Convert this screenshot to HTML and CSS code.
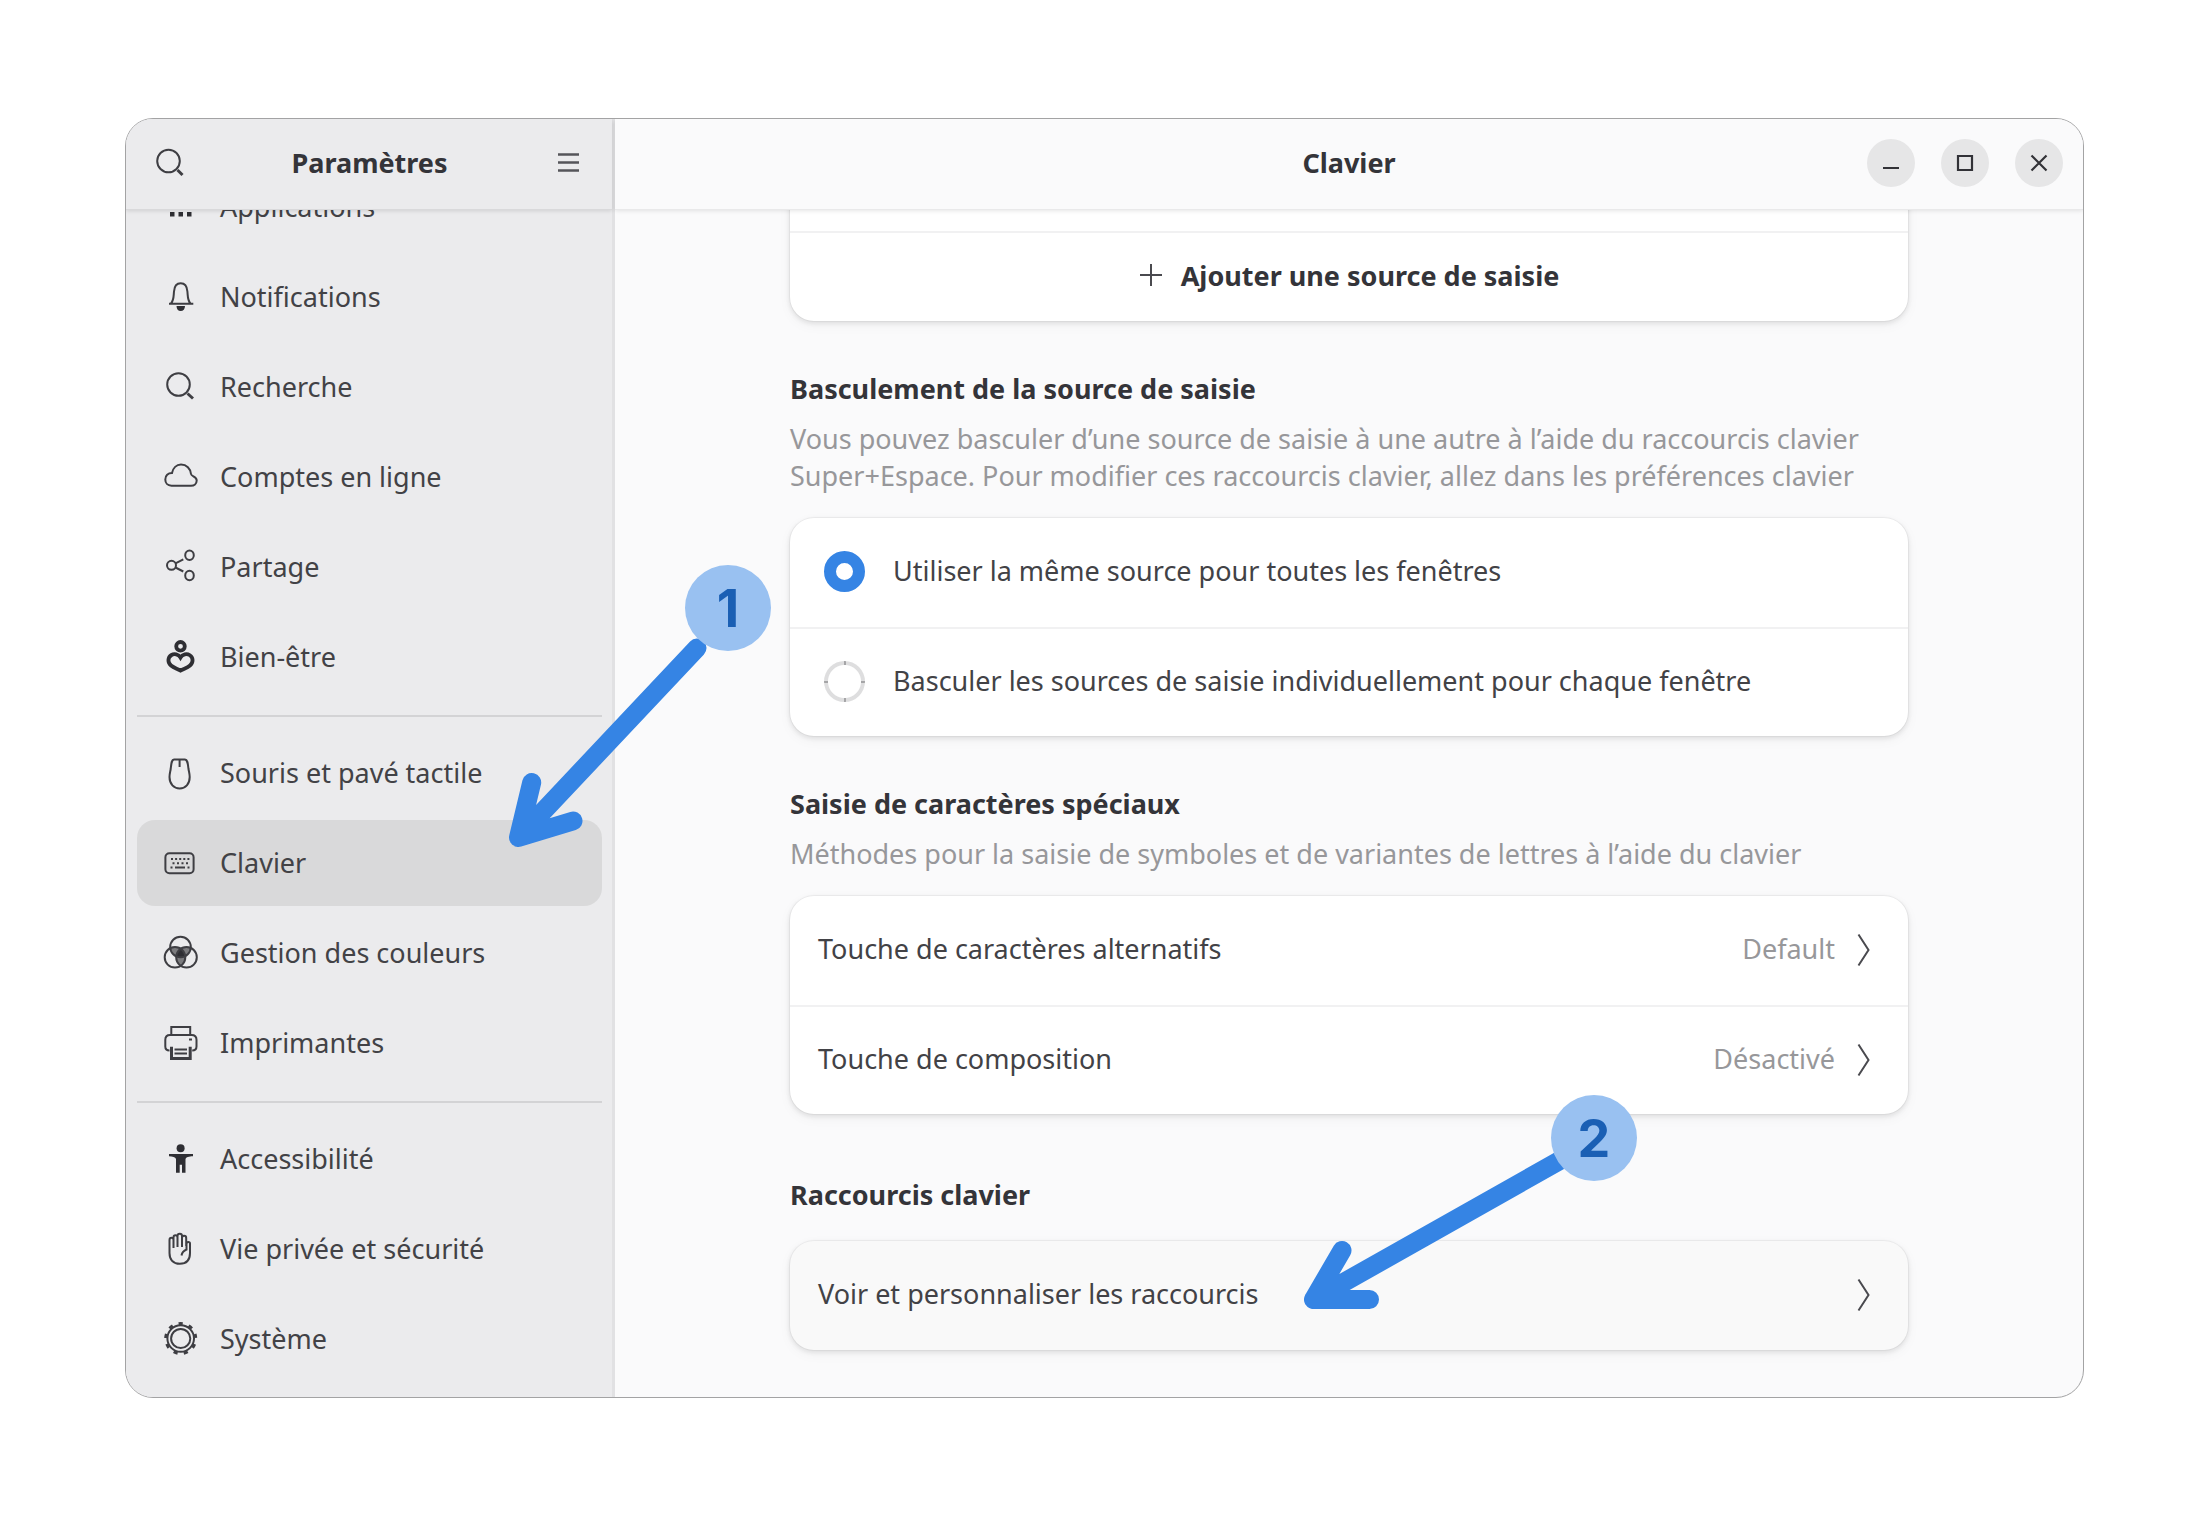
FILE: index.html
```html
<!DOCTYPE html>
<html lang="fr">
<head>
<meta charset="utf-8">
<title>Paramètres – Clavier</title>
<link rel="stylesheet" href="styles.css">
</head>
<body>
<div class="desktop">
  <div class="window">
    <aside class="sidebar">
      <header class="bar sidebar-bar">
        <button class="flat" aria-label="Rechercher">
          <svg class="icon" viewBox="0 0 36 36"><circle cx="15.5" cy="16" r="11.3"/><path class="w3" d="M24.5 25l5 5"/></svg>
        </button>
        <h1 class="title">Paramètres</h1>
        <button class="flat" aria-label="Menu">
          <svg class="icon menu" viewBox="0 0 36 36"><path d="M8 9.500h21M8 17.500h21M8 25.500h21"/></svg>
        </button>
      </header>
      <nav class="list">
        <a class="item" href="#applications">
          <svg class="icon" viewBox="0 0 36 36"><path class="fill" d="M7 23h4.500v4.500H7zM15.500 23H20v4.500h-4.500zM24 23h4.500v4.500H24z"/></svg>Applications</a>
        <a class="item" href="#notifications">
          <svg class="icon" viewBox="0 0 36 36"><path d="M8 24.500C11 21 10.500 17 11 12.500 11.400 7 13.500 4.300 17.700 4.300s6.300 2.700 6.700 8.200c.5 4.500 0 8.500 3 12M6 24.800h24.300"/><path class="fill" d="M13.500 27h8.500c0 3-1.800 5-4.300 5s-4.200-2-4.200-5z"/></svg>Notifications</a>
        <a class="item" href="#recherche">
          <svg class="icon" viewBox="0 0 36 36"><circle cx="15.500" cy="15.500" r="11.300"/><path class="w3" d="M24.500 24.500l5.500 5"/></svg>Recherche</a>
        <a class="item" href="#comptes">
          <svg class="icon" viewBox="0 0 36 36"><path d="M8.500 26.700c-4 0-6.200-2.700-6.200-6.200C2.300 16.500 5 14 9 14c1-5 4.500-8.500 9-8.500 5.500 0 9.500 4 10 9.500.3 2.500 5.700 2.500 5.700 6.500 0 3.500-2.700 5.200-5.700 5.200z"/></svg>Comptes en ligne</a>
        <a class="item" href="#partage">
          <svg class="icon" viewBox="0 0 36 36"><circle cx="8.500" cy="16.300" r="4.500"/><ellipse cx="26.500" cy="6.300" rx="4.300" ry="4.800"/><ellipse cx="26.500" cy="26.500" rx="4.300" ry="4.800"/><path d="M12.500 14.300l7.800-4M12.500 18.500l7.800 4"/></svg>Partage</a>
        <a class="item" href="#bien-etre">
          <svg class="icon" viewBox="0 0 36 36"><circle class="w4" cx="17.500" cy="7.300" r="4.300"/><path class="w4" d="M17.500 18.500C15.500 15 11 14.500 8.500 16c-4 2.500-4 7.500-.5 10.500 3 2.500 6 3 9.500 5 3.500-2 6.500-2.500 9.500-5 3.500-3 3.500-8-.5-10.500-2.500-1.500-7-1-9 2.500z"/></svg>Bien-être</a>
        <hr class="rule">
        <a class="item" href="#souris">
          <svg class="icon" viewBox="0 0 36 36"><path d="M11 4.500h11c2.500 0 2.800 3.500 3.500 9.500.5 3 1.200 5 1.200 8 0 7-4.200 11.500-10 11.500S6.500 29 6.500 22c0-3 .700-5 1.200-8 .700-6 .800-9.500 3.300-9.500zM16.600 5v7"/></svg>Souris et pavé tactile</a>
        <a class="item selected" href="#clavier" aria-current="page">
          <svg class="icon" viewBox="0 0 36 36"><rect x="2.400" y="8.300" width="28.200" height="20" rx="4"/><path stroke-dasharray="2 2.100" d="M8 14h18.500"/><path stroke-dasharray="2 2.500" d="M9.500 18.300h16"/><path d="M7.500 22.500h2M12 22.500h10M24.500 22.500h2"/></svg>Clavier</a>
        <a class="item" href="#couleurs">
          <svg class="icon" viewBox="0 0 36 36">
            <defs>
              <clipPath id="c-top"><circle cx="17.500" cy="12" r="10.300"/></clipPath>
              <clipPath id="c-left"><circle cx="12" cy="22.300" r="10.300"/></clipPath>
            </defs>
            <g class="shade">
              <circle cx="12" cy="22.300" r="10.300" clip-path="url(#c-top)"/>
              <circle cx="23.500" cy="22.300" r="10.300" clip-path="url(#c-top)"/>
              <circle cx="23.500" cy="22.300" r="10.300" clip-path="url(#c-left)"/>
            </g>
            <g clip-path="url(#c-top)"><circle class="fill" cx="23.500" cy="22.300" r="10.300" clip-path="url(#c-left)"/></g>
            <circle cx="17.500" cy="12" r="10.300"/><circle cx="12" cy="22.300" r="10.300"/><circle cx="23.500" cy="22.300" r="10.300"/>
          </svg>Gestion des couleurs</a>
        <a class="item" href="#imprimantes">
          <svg class="icon" viewBox="0 0 36 36"><path d="M8.300 9.500V2h18.900v7.500M6.500 25.500c-2.500 0-4.200-1.500-4.200-4v-6.700c0-3 2-4.800 4.700-4.800h21.500c3 0 5 1.800 5 4.800v6.700c0 2.500-1.800 4-4.300 4M26 14.500h3"/><path class="w3" d="M8.500 21.700v11.800h18.700V21.700"/><path d="M11.500 24.500H24M11.500 28.500H24"/></svg>Imprimantes</a>
        <hr class="rule">
        <a class="item" href="#accessibilite">
          <svg class="icon" viewBox="0 0 36 36"><circle class="fill" cx="17.600" cy="7.300" r="4"/><path class="fill" d="M6 13h24v2.200c-4 0-7 1-7.500 2.800v13.700h-3.500v-8h-2.300v8H13V18c-.5-1.800-3.500-2.800-7-2.800z"/></svg>Accessibilité</a>
        <a class="item" href="#vie-privee">
          <svg class="icon" viewBox="0 0 36 36"><path d="M10.500 17V9c0-3-4-3-4 0v13c0 7 4 10.800 10.300 10.800S27 29 27 22v-9.500c0-2-3.500-2-3.500.5v5.500c-2.500 1-4.500 3-5 6M10.500 17V6.500c0-3 4-3 4 0V16M14.500 6.500V5c0-3 4.500-3 4.500 0v11M19 7c0-3 4.200-3 4.200 0v8"/></svg>Vie privée et sécurité</a>
        <a class="item" href="#systeme">
          <svg class="icon" viewBox="0 0 36 36"><circle cx="17.700" cy="17.500" r="13.300"/><circle cx="17.700" cy="17.500" r="9.600"/><circle class="teeth" cx="17.700" cy="17.500" r="15" pathLength="360" stroke-dasharray="16 24" transform="rotate(-98 17.700 17.500)"/></svg>Système</a>
      </nav>
    </aside>

    <main class="content">
      <header class="bar content-bar">
        <h2 class="title">Clavier</h2>
        <div class="controls">
          <button class="round" aria-label="Réduire"><svg class="glyph" viewBox="0 0 24 24"><path d="M4 17h16"/></svg></button>
          <button class="round" aria-label="Agrandir"><svg class="glyph" viewBox="0 0 24 24"><path d="M5 5h14v14H5z"/></svg></button>
          <button class="round" aria-label="Fermer"><svg class="glyph" viewBox="0 0 24 24"><path d="M4.500 4.500l15 15M19.500 4.500l-15 15"/></svg></button>
        </div>
      </header>
      <div class="scroll">
        <div class="clamp">
          <section class="group">
            <div class="card">
              <div class="row"></div>
              <button class="row add"><svg class="plus" viewBox="0 0 24 24"><path d="M12 1v22M1 12h22"/></svg>Ajouter une source de saisie</button>
            </div>
          </section>
          <section class="group">
            <h3 class="heading">Basculement de la source de saisie</h3>
            <p class="about">Vous pouvez basculer d’une source de saisie à une autre à l’aide du raccourcis clavier Super+Espace. Pour modifier ces raccourcis clavier, allez dans les préférences clavier</p>
            <div class="card">
              <label class="row choice"><input class="radio" type="radio" name="source" checked>Utiliser la même source pour toutes les fenêtres</label>
              <label class="row choice"><input class="radio" type="radio" name="source">Basculer les sources de saisie individuellement pour chaque fenêtre</label>
            </div>
          </section>
          <section class="group">
            <h3 class="heading">Saisie de caractères spéciaux</h3>
            <p class="about">Méthodes pour la saisie de symboles et de variantes de lettres à l’aide du clavier</p>
            <div class="card">
              <button class="row"><span class="label">Touche de caractères alternatifs</span><span class="value">Default</span><svg class="chevron" viewBox="0 0 14 36"><path d="M1.500 2.500L11.500 18l-10 15.500"/></svg></button>
              <button class="row"><span class="label">Touche de composition</span><span class="value">Désactivé</span><svg class="chevron" viewBox="0 0 14 36"><path d="M1.500 2.500L11.500 18l-10 15.500"/></svg></button>
            </div>
          </section>
          <section class="group plain">
            <h3 class="heading">Raccourcis clavier</h3>
            <div class="card hovered">
              <button class="row"><span class="label">Voir et personnaliser les raccourcis</span><svg class="chevron" viewBox="0 0 14 36"><path d="M1.500 2.500L11.500 18l-10 15.500"/></svg></button>
            </div>
          </section>
        </div>
      </div>
    </main>

    <svg class="notes" viewBox="0 0 1957 1277" preserveAspectRatio="xMinYMin meet">
      <path class="arrow" d="M571 529L392.500 718.500M405.700 663.500L392.500 718.500 447 702"/>
      <path class="arrow" d="M1440 1038L1187.500 1180.500M1216 1131.500L1187.500 1180.500H1243.500"/>
      <circle class="badge" cx="602" cy="489" r="43"/>
      <text class="number" x="602" y="508">1</text>
      <circle class="badge" cx="1468" cy="1019" r="43"/>
      <text class="number" x="1468" y="1038">2</text>
    </svg>
  </div>
</div>
</body>
</html>
```
FILE: styles.css
```css
* { box-sizing: border-box; }

body {
  margin: 0;
  background: #fff;
  color: #424246;
  font: 27px/37px "Noto Sans", sans-serif;
}

h1, h2, h3, p { margin: 0; }

button {
  border: 0;
  padding: 0;
  background: none;
  color: inherit;
  font: inherit;
  text-align: left;
}

.desktop {
  display: grid;
  height: 100vh;
  padding: 118px 124px 133px 125px;
}

.window {
  position: relative;
  display: flex;
  min-height: 0;
  overflow: hidden;
  border: 1px solid #a3a3a4;
  border-radius: 28px;
  background: #fafafb;
}

/* Header bars */
.bar {
  position: relative;
  z-index: 1;
  flex: none;
  display: grid;
  align-items: center;
  height: 90px;
}

.title {
  margin-bottom: 2px;
  color: #343439;
  font-size: 27px;
  line-height: 37px;
  font-weight: 700;
}

.sidebar-bar {
  grid-template-columns: 36px 1fr 36px;
  padding: 0 26px 2px 27px;
  background: #ebebed;
  box-shadow: 0 1px 0 #d9d9db, 0 2px 4px rgba(0, 0, 6, .12);
  text-align: center;
}

.content-bar {
  grid-template-columns: 1fr auto 1fr;
  padding: 0 20px 2px;
  background: #fafafb;
  box-shadow: 0 1px 0 #e9e9ea, 0 2px 4px rgba(0, 0, 6, .1);
}

.content-bar .title { grid-column: 2; }

.controls {
  display: flex;
  justify-content: flex-end;
  gap: 26px;
}

.flat { display: flex; }

.round {
  display: grid;
  place-items: center;
  width: 48px;
  height: 48px;
  border-radius: 50%;
  background: #e6e6e7;
}

.glyph { width: 24px; height: 24px; }

.glyph path {
  fill: none;
  stroke: #323237;
  stroke-width: 2.2;
}

/* Icons */
.icon {
  flex: none;
  width: 36px;
  height: 36px;
  fill: none;
  stroke: #3e3e43;
  stroke-width: 2;
}

.icon .fill { fill: #2e2e33; stroke: none; }
.icon .shade { fill: #7b7b7e; stroke: none; }
.icon .w3 { stroke-width: 3; }
.icon .w4 { stroke: #2e2e33; stroke-width: 3.8; }
.icon .teeth { stroke-width: 3; }
.icon.menu { stroke: #55555a; stroke-width: 2.6; }

/* Sidebar */
.sidebar {
  flex: 0 0 489px;
  display: flex;
  flex-direction: column;
  min-height: 0;
  border-right: 3px solid #e1e1e3;
  background: #ebebed;
}

.list {
  flex: 1;
  display: flex;
  flex-direction: column;
  justify-content: flex-end;
  gap: 4px;
  min-height: 0;
  overflow: hidden;
  padding: 0 10px 15px 11px;
}

.item {
  flex: none;
  display: flex;
  align-items: center;
  gap: 21px;
  height: 86px;
  padding: 0 26px 2px;
  border-radius: 18px;
  color: inherit;
  text-decoration: none;
}

.item .icon { margin-top: 2px; }

.item.selected { background: #d9d9da; }

.rule {
  flex: none;
  width: 100%;
  height: 2px;
  margin: 11px 0 9px;
  border: 0;
  background: #d3d3d5;
}

/* Content */
.content {
  flex: 1;
  display: flex;
  flex-direction: column;
  min-width: 0;
}

.scroll {
  flex: 1;
  display: flex;
  flex-direction: column;
  justify-content: flex-end;
  align-items: center;
  min-height: 0;
  overflow: hidden;
  padding: 0 24px 47px;
}

.clamp {
  flex: none;
  width: 100%;
  max-width: 1118px;
}

.group + .group { margin-top: 49px; }
.group + .group.plain { margin-top: 62px; }

.heading {
  color: #343439;
  font-size: 27px;
  line-height: 37px;
  font-weight: 700;
}

.about {
  margin-top: 13px;
  color: #97979a;
}

.about + .card { margin-top: 24px; }
.plain .card { margin-top: 28px; }

.card {
  overflow: hidden;
  border-radius: 24px;
  background: #fff;
  box-shadow: 0 0 0 1px rgba(0, 0, 6, .04), 0 2px 4px 1px rgba(0, 0, 6, .08), 0 4px 12px 2px rgba(0, 0, 6, .03);
}

.card.hovered { background: #f9f9f9; }

.row {
  display: flex;
  align-items: center;
  width: 100%;
  height: 109px;
  padding: 0 28px 4px;
}

.row + .row { border-top: 2px solid #f1f1f2; }

.row.add {
  justify-content: center;
  gap: 18px;
  height: 90px;
  color: #343439;
  font-weight: 700;
}

.choice {
  gap: 28px;
  padding: 0 34px 4px;
}

.radio {
  flex: none;
  appearance: none;
  width: 41px;
  height: 41px;
  margin: 2px 0 0;
  border-radius: 50%;
  background:
    linear-gradient(#a5a5a7, #a5a5a7) 50% 0 / 2px 4px no-repeat,
    linear-gradient(#a5a5a7, #a5a5a7) 50% 100% / 2px 4px no-repeat,
    linear-gradient(#a5a5a7, #a5a5a7) 0 50% / 4px 2px no-repeat,
    linear-gradient(#a5a5a7, #a5a5a7) 100% 50% / 4px 2px no-repeat,
    radial-gradient(circle closest-side, #fff 16px, #dededf 17px);
}

.radio:checked {
  border: 12px solid #3584e4;
  background: #fff;
}

.label { flex: 1; }
.value { color: #97979a; }

.chevron {
  width: 14px;
  height: 36px;
  margin: 2px 9px 0 22px;
}

.chevron path,
.plus path {
  fill: none;
  stroke: #4a4a4f;
  stroke-width: 2;
}

.plus { width: 24px; height: 24px; }

/* Step annotations laid over the window */
.notes {
  position: absolute;
  z-index: 2;
  inset: 0;
  width: 100%;
  height: 100%;
  pointer-events: none;
}

.arrow {
  fill: none;
  stroke: #3584e4;
  stroke-width: 19;
  stroke-linecap: round;
  stroke-linejoin: round;
}

.badge { fill: #99c1f1; }

.number {
  fill: #1a5fb4;
  font: 700 52px Inter, sans-serif;
  text-anchor: middle;
}
```
